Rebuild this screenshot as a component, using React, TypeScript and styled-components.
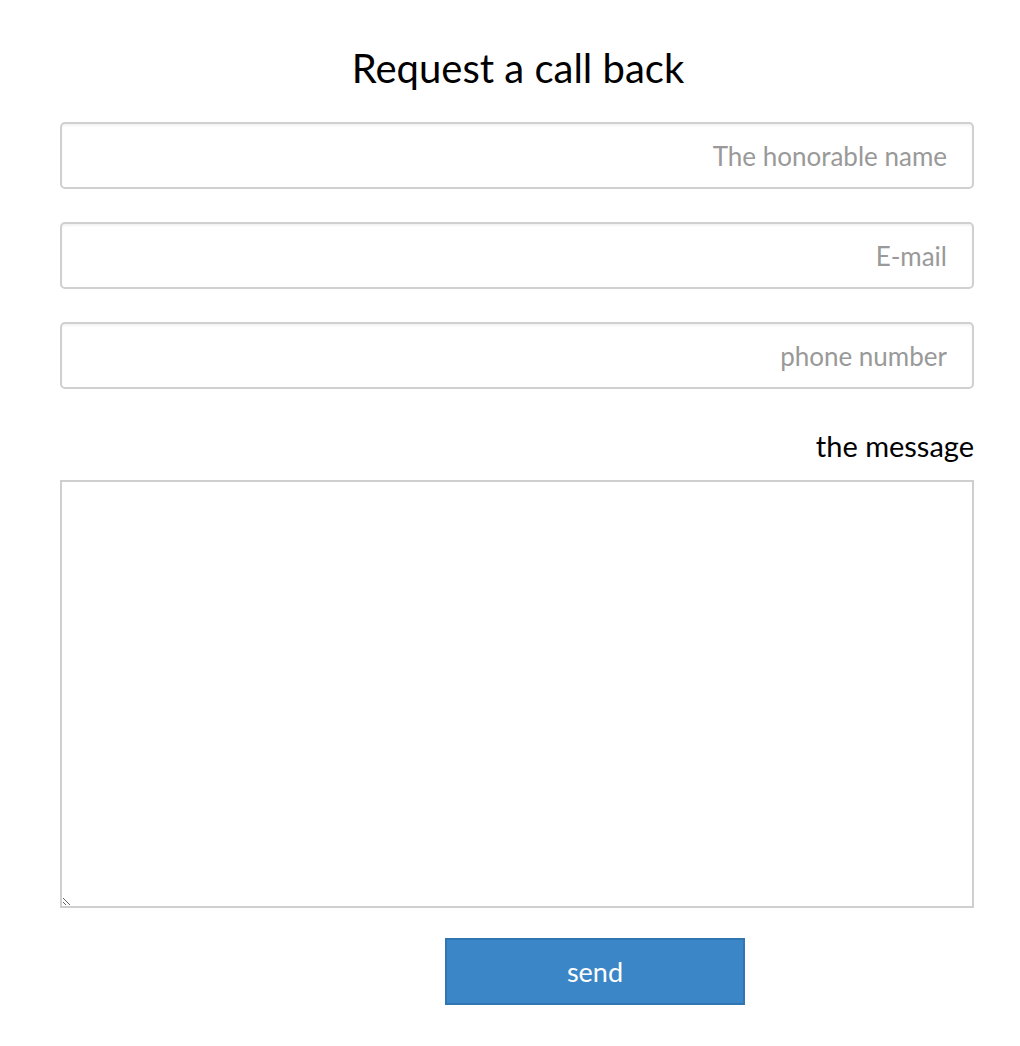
import React from "react";
import styled, { createGlobalStyle } from "styled-components";

const Global = createGlobalStyle`
  html, body { margin: 0; padding: 0; background: #fff; }
  body { font-family: "Lato", "Noto Sans", sans-serif; color: #000; }
  * { box-sizing: border-box; }
`;

const Page = styled.div`
  width: 1020px;
  padding: 44px 46px 40px 60px;
  display: flex;
  flex-direction: column;
`;

const Title = styled.h1`
  margin: 0 0 30px;
  text-align: center;
  font-weight: 400;
  font-size: 40px;
  line-height: 48px;
  padding-left: 2px;
`;

const Form = styled.form`
  display: flex;
  flex-direction: column;
`;

const Field = styled.input`
  width: 914px;
  height: 67px;
  margin: 0 0 33px;
  padding: 0 25px;
  border: 2px solid #d0d0d0;
  border-radius: 5px;
  box-shadow: inset 0 2px 2px rgba(0, 0, 0, 0.05);
  font-family: inherit;
  font-size: 26px;
  text-align: right;
  color: #555;
  outline: none;
  &::placeholder { color: #999; }
`;

const Label = styled.label`
  display: block;
  text-align: right;
  width: 914px;
  font-size: 29px;
  line-height: 34px;
  margin: 7px 0 17px;
`;

const Message = styled.textarea`
  width: 914px;
  height: 428px;
  border: 2px solid #cfcfcf;
  border-radius: 0;
  font-family: inherit;
  font-size: 24px;
  resize: both;
  margin: 0 0 30px;
  outline: none;
`;

const Send = styled.button`
  align-self: flex-start;
  margin-left: 385px;
  width: 300px;
  height: 67px;
  background: #3b86c6;
  border: 2px solid #2f76b2;
  color: #fff;
  font-family: inherit;
  font-size: 27px;
  cursor: pointer;
`;

export default function App() {
  return (
    <>
      <Global />
      <Page>
        <Title>Request a call back</Title>
        <Form onSubmit={(e) => e.preventDefault()}>
          <Field type="text" placeholder="The honorable name" />
          <Field type="email" placeholder="E-mail" />
          <Field type="tel" placeholder="phone number" />
          <Label htmlFor="msg">the message</Label>
          <Message id="msg" dir="rtl" />
          <Send type="submit">send</Send>
        </Form>
      </Page>
    </>
  );
}
